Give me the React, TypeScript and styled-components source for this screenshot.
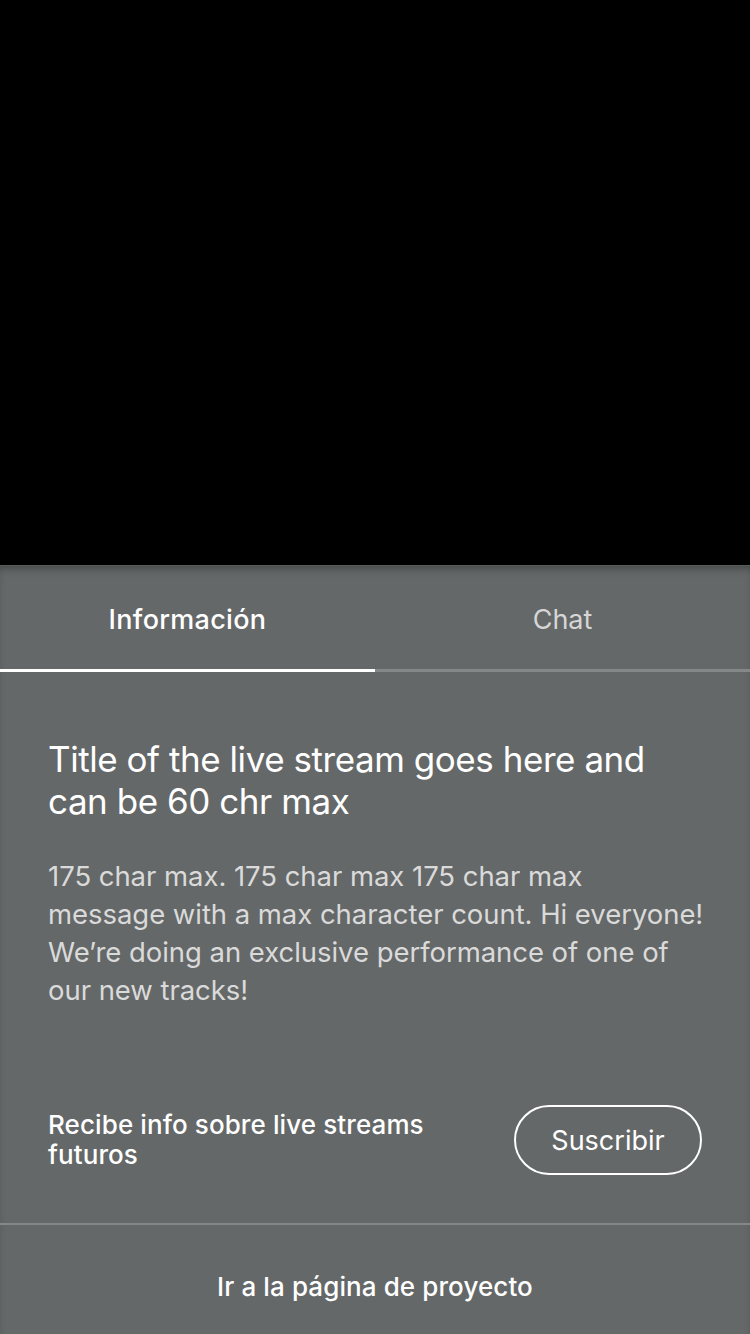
import React, { useState } from "react";
import styled, { createGlobalStyle } from "styled-components";

const GlobalStyle = createGlobalStyle`
  html, body {
    margin: 0;
    padding: 0;
    background: #656868;
  }
  body {
    font-family: Inter, "Noto Sans", sans-serif;
    -webkit-font-smoothing: antialiased;
  }
`;

const Screen = styled.div`
  width: 750px;
  height: 1334px;
  display: flex;
  flex-direction: column;
  overflow: hidden;
`;

const Video = styled.div`
  height: 565px;
  background: #000;
  flex-shrink: 0;
`;

const Panel = styled.div`
  flex: 1;
  display: flex;
  flex-direction: column;
  background: #656868;
  border-top: 1px solid #585a5a;
  box-shadow: inset 0 6px 8px -4px rgba(0, 0, 0, 0.35);
`;

const Tabs = styled.div`
  display: flex;
  height: 106px;
`;

const Tab = styled.button<{ $active?: boolean }>`
  flex: 1;
  background: none;
  border: none;
  border-bottom: ${(p) => (p.$active ? "3px solid #ffffff" : "3px solid #858888")};
  padding: 4px 0 0;
  font-family: inherit;
  font-size: 27px;
  font-weight: ${(p) => (p.$active ? 500 : 400)};
  letter-spacing: ${(p) => (p.$active ? "0.3px" : "0")};
  color: ${(p) => (p.$active ? "#ffffff" : "#d6d6d6")};
  cursor: pointer;
`;

const Content = styled.div`
  padding: 66px 48px 0;
  display: flex;
  flex-direction: column;
`;

const Title = styled.h1`
  margin: 0;
  font-size: 35px;
  line-height: 42px;
  font-weight: 400;
  color: #ffffff;
  letter-spacing: -0.45px;
`;

const Description = styled.p`
  margin: 35px 0 0;
  font-size: 27.5px;
  line-height: 38px;
  color: #dadada;
  letter-spacing: -0.05px;
  white-space: nowrap;
`;

const SubscribeRow = styled.div`
  display: flex;
  align-items: center;
  justify-content: space-between;
  margin-top: 96px;
  padding-bottom: 48px;
`;

const SubscribeText = styled.div`
  font-size: 26px;
  line-height: 30px;
  font-weight: 500;
  letter-spacing: 0.1px;
  color: #ffffff;
  max-width: 420px;
`;

const OutlineButton = styled.button`
  width: 188px;
  height: 70px;
  border: 2px solid #ffffff;
  border-radius: 35px;
  background: transparent;
  color: #ffffff;
  font-family: inherit;
  font-size: 27px;
  font-weight: 400;
  cursor: pointer;
`;

const Divider = styled.div`
  height: 2px;
  background: #858888;
`;

const FooterLink = styled.a`
  display: block;
  text-align: center;
  padding-top: 46px;
  font-size: 26px;
  font-weight: 500;
  letter-spacing: 0.1px;
  color: #ffffff;
  text-decoration: none;
`;

const App = () => {
  const [tab, setTab] = useState("info");

  return (
    <Screen>
      <GlobalStyle />
      <Video />
      <Panel>
        <Tabs>
          <Tab $active={tab === "info"} onClick={() => setTab("info")}>
            Información
          </Tab>
          <Tab $active={tab === "chat"} onClick={() => setTab("chat")}>
            Chat
          </Tab>
        </Tabs>
        <Content>
          <Title>
            Title of the live stream goes here and
            <br />
            can be 60 chr max
          </Title>
          <Description>
            175 char max. 175 char max 175 char max
            <br />
            message with a max character count. Hi everyone!
            <br />
            We’re doing an exclusive performance of one of
            <br />
            our new tracks!
          </Description>
          <SubscribeRow>
            <SubscribeText>Recibe info sobre live streams futuros</SubscribeText>
            <OutlineButton>Suscribir</OutlineButton>
          </SubscribeRow>
        </Content>
        <Divider />
        <FooterLink href="#">Ir a la página de proyecto</FooterLink>
      </Panel>
    </Screen>
  );
};

export default App;
